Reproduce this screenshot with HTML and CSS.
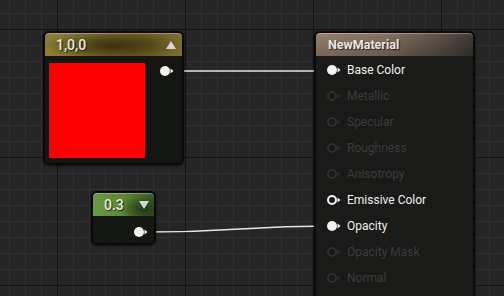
FILE: index.html
```html
<!DOCTYPE html>
<html lang="en">
<head>
    <meta charset="UTF-8">
    <title>Material Graph</title>
    <link rel="stylesheet" href="styles.css">
</head>
<body>
<div class="graph">
    <!-- wires sit under the nodes -->
    <svg class="wires" width="504" height="296" viewBox="0 0 504 296">
        <path d="M172 71 C250 71 250 71 330 71"/>
        <path d="M147 232 C240 232 240 226 330 226"/>
    </svg>

    <div class="node node-color">
        <div class="head head-gold">
            <span class="title">1,0,0</span>
            <span class="tri tri-up"></span>
        </div>
        <div class="color-body">
            <div class="swatch"></div>
            <svg class="pin pin-out" width="16" height="12" viewBox="0 0 16 12">
                <circle cx="6" cy="6" r="5" class="fill"/>
                <polygon points="11.5,3.5 14.5,6 11.5,8.5" class="fill"/>
            </svg>
        </div>
    </div>

    <div class="node node-scalar">
        <div class="head head-green">
            <span class="title">0.3</span>
            <span class="tri tri-down"></span>
        </div>
        <div class="scalar-body">
            <svg class="pin" width="16" height="12" viewBox="0 0 16 12">
                <circle cx="6" cy="6" r="5" class="fill"/>
                <polygon points="11.5,3.5 14.5,6 11.5,8.5" class="fill"/>
            </svg>
        </div>
    </div>

    <div class="node node-material">
        <div class="head head-tan">
            <span class="title bold">NewMaterial</span>
        </div>
        <ul class="inputs">
            <li class="on">
                <svg class="pin" width="16" height="12" viewBox="0 0 16 12"><circle cx="6" cy="6" r="5" class="fill"/><polygon points="11.5,3.5 14.5,6 11.5,8.5" class="fill"/></svg>
                Base Color
            </li>
            <li>
                <svg class="pin" width="16" height="12" viewBox="0 0 16 12"><circle cx="6" cy="6" r="4" class="ring"/><polygon points="11.5,3.5 14.5,6 11.5,8.5" class="fill"/></svg>
                Metallic
            </li>
            <li>
                <svg class="pin" width="16" height="12" viewBox="0 0 16 12"><circle cx="6" cy="6" r="4" class="ring"/><polygon points="11.5,3.5 14.5,6 11.5,8.5" class="fill"/></svg>
                Specular
            </li>
            <li>
                <svg class="pin" width="16" height="12" viewBox="0 0 16 12"><circle cx="6" cy="6" r="4" class="ring"/><polygon points="11.5,3.5 14.5,6 11.5,8.5" class="fill"/></svg>
                Roughness
            </li>
            <li>
                <svg class="pin" width="16" height="12" viewBox="0 0 16 12"><circle cx="6" cy="6" r="4" class="ring"/><polygon points="11.5,3.5 14.5,6 11.5,8.5" class="fill"/></svg>
                Anisotropy
            </li>
            <li class="on">
                <svg class="pin" width="16" height="12" viewBox="0 0 16 12"><circle cx="6" cy="6" r="4" class="ring"/><polygon points="11.5,3.5 14.5,6 11.5,8.5" class="fill"/></svg>
                Emissive Color
            </li>
            <li class="on">
                <svg class="pin" width="16" height="12" viewBox="0 0 16 12"><circle cx="6" cy="6" r="5" class="fill"/><polygon points="11.5,3.5 14.5,6 11.5,8.5" class="fill"/></svg>
                Opacity
            </li>
            <li>
                <svg class="pin" width="16" height="12" viewBox="0 0 16 12"><circle cx="6" cy="6" r="4" class="ring"/><polygon points="11.5,3.5 14.5,6 11.5,8.5" class="fill"/></svg>
                Opacity Mask
            </li>
            <li>
                <svg class="pin" width="16" height="12" viewBox="0 0 16 12"><circle cx="6" cy="6" r="4" class="ring"/><polygon points="11.5,3.5 14.5,6 11.5,8.5" class="fill"/></svg>
                Normal
            </li>
        </ul>
    </div>
</div>
</body>
</html>
```

FILE: styles.css
```css
*{margin:0;padding:0;list-style:none;box-sizing:border-box;}
body{background:#262626;font-family:Roboto,"Liberation Sans",sans-serif;}

/* canvas grid: minor every 16px, major every 128px */
.graph{position:relative;width:504px;height:296px;overflow:hidden;background-color:#262626;
    background-image:
        linear-gradient(to right,#141414 1px,transparent 1px),
        linear-gradient(to bottom,#141414 1px,transparent 1px),
        linear-gradient(to right,#323232 1px,transparent 1px),
        linear-gradient(to bottom,#323232 1px,transparent 1px);
    background-size:128px 128px,128px 128px,16px 16px,16px 16px;
    background-position:57px 29px;}

.wires{position:absolute;left:0;top:0;}
.wires path{fill:none;stroke:#e6e6e6;stroke-width:1.6;}

.node{position:absolute;border:2px solid #0a0a0a;border-radius:6px;
    box-shadow:0 1px 3px rgba(0,0,0,.6);}
.head{height:23px;display:flex;align-items:center;justify-content:space-between;
    border-radius:4px 4px 0 0;color:#e8e8e8;font-size:14px;font-weight:500;
    box-shadow:inset 0 1px 0 rgba(255,255,255,.3);
    text-shadow:1px 1px 1px rgba(0,0,0,.7);}
.head .bold{font-weight:700;font-size:12.5px;}
.tri{width:0;height:0;border-left:5.5px solid transparent;border-right:5.5px solid transparent;}
.tri-up{border-bottom:8px solid #d6d6d6;}
.tri-down{border-top:8px solid #d6d6d6;}

.head-gold{padding:0 6px 0 11px;
    background:radial-gradient(ellipse 70px 15px at 50% 55%,#3a300e 0%,rgba(58,48,14,.55) 50%,rgba(58,48,14,0) 100%),
        linear-gradient(to right,#8e7d32 0%,#85752f 30%,#6f6228 70%,#7b6d2e 100%);}
.head-green{padding:0 5px 0 11px;
    background:radial-gradient(ellipse 24px 14px at 85% 70%,#233614 0%,rgba(35,54,20,0) 100%),
        linear-gradient(to right,#6b9a40 0%,#5a8836 50%,#3a5a22 100%);}
.head-tan{padding:0 0 0 12px;
    background:linear-gradient(to bottom,rgba(255,255,255,.06),rgba(0,0,0,.15)),
        linear-gradient(to right,#8d7964 0%,#7c6a57 45%,#4a423a 85%,#35312c 100%);}

.node-color{left:43px;top:31px;width:141px;height:134px;background:#141611;}
.color-body{display:flex;align-items:flex-start;padding:7px 0 0 4px;}
.swatch{width:96px;height:95px;background:#ff0000;}
.color-body .pin{margin:2px 0 0 14px;}

.node-scalar{left:91px;top:191px;width:65px;height:54px;background:#151713;}
.scalar-body{display:flex;justify-content:flex-end;padding:10px 5px 0 0;}

.pin{display:block;flex:none;}
.pin .fill{fill:#f2f2f2;}
.pin .ring{fill:none;stroke:#f2f2f2;stroke-width:2;}

.node-material{left:314px;top:31px;width:161px;height:290px;background:#1a1a18;}
.inputs{padding-top:1px;}
.inputs li{height:26px;display:flex;align-items:center;gap:5px;padding-left:10px;
    font-size:12px;color:#3c3c3c;}
.inputs li .fill{fill:#2e2e2e;}
.inputs li .ring{stroke:#2e2e2e;}
.inputs li.on{color:#f0f0f0;}
.inputs li.on .fill{fill:#f2f2f2;}
.inputs li.on .ring{stroke:#f2f2f2;}
```
